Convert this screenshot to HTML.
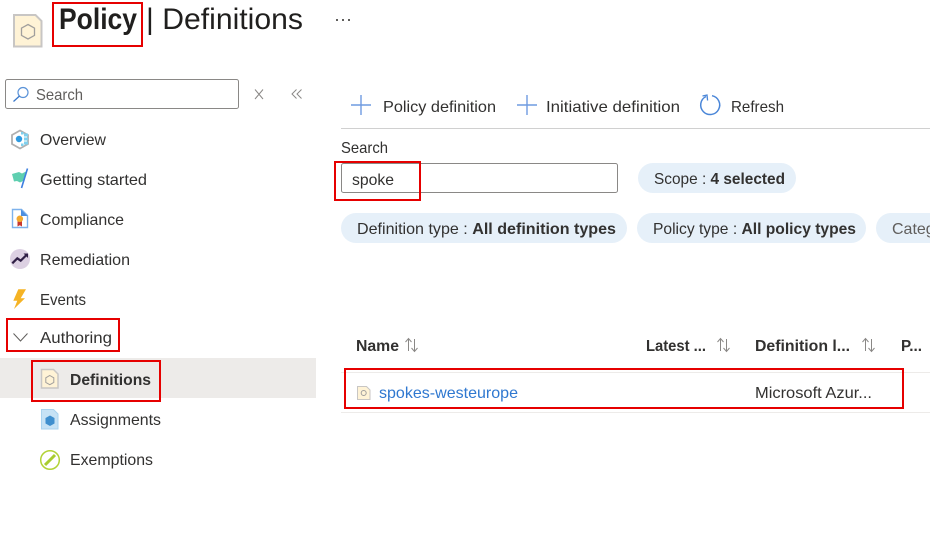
<!DOCTYPE html>
<html><head><meta charset="utf-8"><title>Policy | Definitions</title>
<style>
html,body{margin:0;padding:0;background:#fff;width:930px;height:557px;overflow:hidden}
svg{display:block}
text{font-family:"Liberation Sans",Arial,sans-serif;font-size:16px;fill:#323130}
.b{font-weight:bold}
</style></head><body>
<svg width="930" height="557" viewBox="0 0 930 557" xmlns="http://www.w3.org/2000/svg">
<rect width="930" height="557" fill="#fff"/>
<!-- header -->
<path d="M14 15H35.500L41.500 21V46.500H14z" fill="#fff3d6" stroke="#c8c6c4" stroke-width="2"/>
<path d="M28 24.500l6.500 3.600v7.300L28 39l-6.500-3.600v-7.300z" fill="none" stroke="#a19f9d" stroke-width="1.300"/>
<text x="59" y="29" class="b" style="font-size:30px;fill:#201f1e" textLength="78" lengthAdjust="spacingAndGlyphs">Policy</text>
<text x="146" y="29" style="font-size:30px;fill:#201f1e" textLength="157" lengthAdjust="spacingAndGlyphs">| Definitions</text>
<rect x="336" y="19" width="2" height="2" fill="#605e5c"/><rect x="342" y="19" width="2" height="2" fill="#605e5c"/><rect x="348" y="19" width="2" height="2" fill="#605e5c"/>
<!-- sidebar search -->
<rect x="5.500" y="79.500" width="233" height="29" rx="2" fill="#fff" stroke="#8a8886"/>
<circle cx="23" cy="92.500" r="5" fill="none" stroke="#5b93d8" stroke-width="1.200"/>
<path d="M19.500 96l-6 5.500" stroke="#3a78c9" stroke-width="1.300"/>
<text x="36" y="100" style="fill:#605e5c" textLength="47" lengthAdjust="spacingAndGlyphs">Search</text>
<path d="M255 89.500l8 9.500M263 89.500l-8 9.500" stroke="#8a8886" stroke-width="1" fill="none"/>
<path d="M296.500 89.500l-4.500 4.500 4.500 4.500M301.500 89.500l-4.500 4.500 4.500 4.500" stroke="#8a8886" stroke-width="1" fill="none"/>
<!-- nav icons -->
<path d="M20 130.500l8 4.500v9l-8 4.500-8-4.500v-9z" fill="#fff" stroke="#b0b0b0" stroke-width="1.800"/>
<circle cx="19" cy="139" r="3.200" fill="#2f9ae0"/>
<g fill="#7fd0ee"><rect x="24" y="133.500" width="4" height="3"/><rect x="24" y="137.500" width="4" height="3"/><rect x="24" y="141.500" width="4" height="3"/><rect x="21" y="132" width="2.500" height="2.500"/><rect x="21" y="143.500" width="2.500" height="2.500"/></g>
<path d="M12 174l7-2 3 1.500 4-2-2 9-4 2-3-1.500-3 .5z" fill="#5fcfb0"/>
<path d="M27.500 168.500l-6 19.500" stroke="#3d7fe0" stroke-width="1.600" fill="none"/>
<path d="M12.500 209.500h9l6 6v12h-15z" fill="#fff" stroke="#7eb2ec" stroke-width="1.400"/>
<path d="M21 209.500l6.500 6.500H21z" fill="#4c8fe0"/>
<path d="M17.500 220h4.500v6.500l-2.200-1.300-2.300 1.300z" fill="#c8372f"/>
<circle cx="19.800" cy="218.800" r="3.300" fill="#f3a92f"/>
<circle cx="20" cy="259" r="10" fill="#dcd0e2"/>
<path d="M12.300 263.300l5-5 3.400 2.400 5.800-5.700" fill="none" stroke="#2f1f45" stroke-width="2.200"/>
<path d="M23.500 253.500h4.500v4.500z" fill="#2f1f45"/>
<path d="M18.300 289.300H26L20.700 298.300H25L14 309 17.300 300.700H13.300z" fill="#f5b324"/>
<path d="M13.500 333.500l7 7.500 7-7.500" fill="none" stroke="#605e5c" stroke-width="1"/>
<!-- selected row -->
<rect x="0" y="358" width="316" height="40" fill="#edebe9"/>
<path d="M41.500 369.500h12l4.500 4.500v14h-16.500z" fill="#fff3d6" stroke="#c8c6c4" stroke-width="1.500"/>
<path d="M49.800 375.500l4 2.300v4.600l-4 2.300-4-2.300v-4.600z" fill="none" stroke="#a19f9d"/>
<path d="M41.500 409.500h12l4.500 4.500v15h-16.500z" fill="#c6e2f5" stroke="#a9d3ef" stroke-width="1"/>
<path d="M50 415.500l4.500 2.500v5.500L50 426l-4.500-2.500V418z" fill="#3f8fce"/>
<circle cx="50" cy="460" r="9.300" fill="#fff" stroke="#b2d235" stroke-width="1.500"/>
<path d="M45 465l10-10" stroke="#a8cc2f" stroke-width="3"/>
<!-- nav text -->
<text x="40" y="145" textLength="66" lengthAdjust="spacingAndGlyphs">Overview</text>
<text x="40" y="185" textLength="107" lengthAdjust="spacingAndGlyphs">Getting started</text>
<text x="40" y="225" textLength="84" lengthAdjust="spacingAndGlyphs">Compliance</text>
<text x="40" y="265" textLength="90" lengthAdjust="spacingAndGlyphs">Remediation</text>
<text x="40" y="305" textLength="46" lengthAdjust="spacingAndGlyphs">Events</text>
<text x="40" y="343" textLength="72" lengthAdjust="spacingAndGlyphs">Authoring</text>
<text x="70" y="385" class="b" textLength="81" lengthAdjust="spacingAndGlyphs">Definitions</text>
<text x="70" y="425" textLength="91" lengthAdjust="spacingAndGlyphs">Assignments</text>
<text x="70" y="465" textLength="83" lengthAdjust="spacingAndGlyphs">Exemptions</text>
<!-- toolbar -->
<path d="M361 95v20M351 105h20M527 95v20M517 105h20" stroke="#6f9be0" stroke-width="1.400" fill="none"/>
<text x="383" y="112" textLength="113" lengthAdjust="spacingAndGlyphs">Policy definition</text>
<text x="546" y="112" textLength="134" lengthAdjust="spacingAndGlyphs">Initiative definition</text>
<path d="M712 95.700a9.500 9.500 0 1 1-6 .8" fill="none" stroke="#4a86d8" stroke-width="1.500"/>
<path d="M702.500 96L707 95l.6 5.500" fill="none" stroke="#4a86d8" stroke-width="1.300"/>
<text x="731" y="112" textLength="53" lengthAdjust="spacingAndGlyphs">Refresh</text>
<rect x="341" y="128" width="589" height="1" fill="#d0d0d0"/>
<!-- filter -->
<text x="341" y="153" textLength="47" lengthAdjust="spacingAndGlyphs">Search</text>
<rect x="341.500" y="163.500" width="276" height="29" rx="2" fill="#fff" stroke="#8a8886"/>
<text x="352" y="185" textLength="42" lengthAdjust="spacingAndGlyphs">spoke</text>
<rect x="638" y="163" width="158" height="30" rx="15" fill="#e6f0f9"/>
<text x="654" y="184" textLength="131" lengthAdjust="spacingAndGlyphs">Scope : <tspan class="b">4 selected</tspan></text>
<rect x="341" y="213" width="286" height="30" rx="15" fill="#e6f0f9"/>
<text x="357" y="234" textLength="259" lengthAdjust="spacingAndGlyphs">Definition type : <tspan class="b">All definition types</tspan></text>
<rect x="637" y="213" width="229" height="30" rx="15" fill="#e6f0f9"/>
<text x="653" y="234" textLength="203" lengthAdjust="spacingAndGlyphs">Policy type : <tspan class="b">All policy types</tspan></text>
<rect x="876" y="213" width="80" height="30" rx="15" fill="#e6f0f9"/>
<text x="892" y="234" style="fill:#605e5c">Categ</text>
<!-- table -->
<text x="356" y="351" class="b" textLength="43" lengthAdjust="spacingAndGlyphs">Name</text>
<g fill="none" stroke="#8a8886" stroke-width="1">
<path d="M408.500 351v-12M405.500 342l3-3.500 3 3.500M414.500 339v12M411.500 348l3 3.500 3-3.500"/>
<path d="M720.500 351v-12M717.500 342l3-3.500 3 3.500M726.500 339v12M723.500 348l3 3.500 3-3.500"/>
<path d="M865.500 351v-12M862.500 342l3-3.500 3 3.500M871.500 339v12M868.500 348l3 3.500 3-3.500"/>
</g>
<text x="646" y="351" class="b" textLength="60" lengthAdjust="spacingAndGlyphs">Latest ...</text>
<text x="755" y="351" class="b" textLength="95" lengthAdjust="spacingAndGlyphs">Definition l...</text>
<text x="901" y="351" class="b" textLength="21" lengthAdjust="spacingAndGlyphs">P...</text>
<rect x="341" y="372" width="589" height="1" fill="#edebe9"/>
<rect x="341" y="412" width="589" height="1" fill="#edebe9"/>
<path d="M357.500 386.500h9l3.500 3.500v9.500h-12.500z" fill="#fff3d6" stroke="#c8c6c4"/>
<circle cx="363.700" cy="393" r="2.500" fill="none" stroke="#a19f9d"/>
<text x="379" y="398" style="fill:#2f78d0" textLength="139" lengthAdjust="spacingAndGlyphs">spokes-westeurope</text>
<text x="755" y="398" textLength="117" lengthAdjust="spacingAndGlyphs">Microsoft Azur...</text>
<!-- red annotation boxes -->
<g fill="none" stroke="#e60000" stroke-width="2">
<rect x="53" y="3" width="89" height="43"/>
<rect x="7" y="319" width="112" height="32"/>
<rect x="32" y="361" width="128" height="40"/>
<rect x="335" y="162" width="85" height="38"/>
<rect x="345" y="369" width="558" height="39"/>
</g>
</svg>
</body></html>
